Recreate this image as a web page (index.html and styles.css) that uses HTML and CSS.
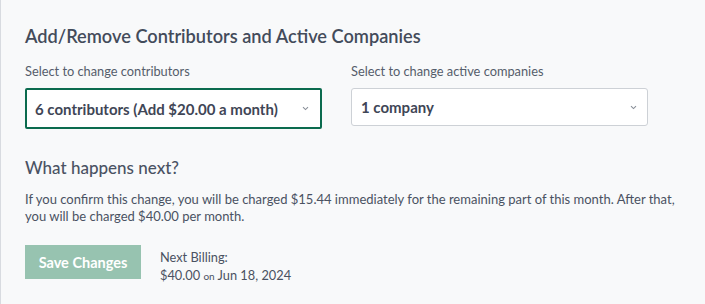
FILE: index.html
```html
<!DOCTYPE html>
<html>
<head>
<meta charset="utf-8">
<link rel="stylesheet" href="styles.css">
</head>
<body>
<div class="panel">
  <h2 class="title">Add/Remove Contributors and Active Companies</h2>
  <div class="fields">
    <div class="field">
      <div class="label">Select to change contributors</div>
      <div class="select select-active">
        <span class="value">6 contributors (Add $20.00 a month)</span>
        <svg class="chev" width="7" height="5" viewBox="0 0 7 5"><path d="M1 1.2 L3.5 3.6 L6 1.2" fill="none" stroke="#8a9099" stroke-width="1.1"/></svg>
      </div>
    </div>
    <div class="field">
      <div class="label">Select to change active companies</div>
      <div class="select">
        <span class="value">1 company</span>
        <svg class="chev" width="7" height="5" viewBox="0 0 7 5"><path d="M1 1.2 L3.5 3.6 L6 1.2" fill="none" stroke="#8a9099" stroke-width="1.1"/></svg>
      </div>
    </div>
  </div>
  <h3 class="subtitle">What happens next?</h3>
  <p class="desc">If you confirm this change, you will be charged $15.44 immediately for the remaining part of this month. After that, you will be charged $40.00 per month.</p>
  <div class="actions">
    <button class="save">Save Changes</button>
    <div class="billing">
      <div>Next Billing:</div>
      <div>$40.00 <span class="on">on</span> Jun 18, 2024</div>
    </div>
  </div>
</div>
</body>
</html>
```
FILE: styles.css
```css
html, body {
  margin: 0;
  padding: 0;
  background: #f8f9fa;
}
body {
  font-family: "Lato", "Noto Sans", sans-serif;
  color: #4a5262;
}
.panel {
  box-sizing: border-box;
  width: 705px;
  height: 304px;
  border-left: 1px solid #d8dbe0;
  padding: 24px 24px 0 24px;
}
.title {
  margin: 0;
  font-size: 18.2px;
  font-weight: 600;
  color: #434b5a;
  line-height: 24px;
}
.fields {
  display: flex;
  gap: 29px;
  margin-top: 15px;
}
.field {
  width: 297px;
}
.label {
  font-size: 12.8px;
  color: #555d6b;
  line-height: 16px;
}
.select {
  box-sizing: border-box;
  margin-top: 9px;
  height: 38px;
  background: #fff;
  border: 1px solid #cdd1d6;
  border-radius: 3px;
  display: flex;
  align-items: center;
  justify-content: space-between;
  padding: 0 10px 0 9px;
}
.select-active {
  height: 41px;
  border: 2px solid #0b6b4e;
  border-radius: 2px;
  padding-left: 8px;
  padding-right: 11px;
}
.value {
  font-size: 15px;
  font-weight: 700;
  color: #3f4656;
}
.chev {
  display: block;
}
.subtitle {
  margin: 28px 0 0 0;
  font-size: 17px;
  font-weight: 500;
  color: #4a5263;
  line-height: 22px;
}
.desc {
  margin: 12px 0 0 0;
  font-size: 13px;
  line-height: 17px;
  color: #4a5262;
  width: 660px;
}
.actions {
  display: flex;
  align-items: flex-start;
  gap: 19px;
  margin-top: 20px;
}
.save {
  width: 116px;
  height: 34px;
  background: #97c3b0;
  color: #fff;
  border: none;
  font-family: inherit;
  font-size: 14.5px;
  font-weight: 700;
  padding: 0;
}
.billing {
  font-size: 12.8px;
  line-height: 18px;
  color: #4a5262;
  margin-top: 3px;
}
.on {
  font-size: 10px;
}
```
